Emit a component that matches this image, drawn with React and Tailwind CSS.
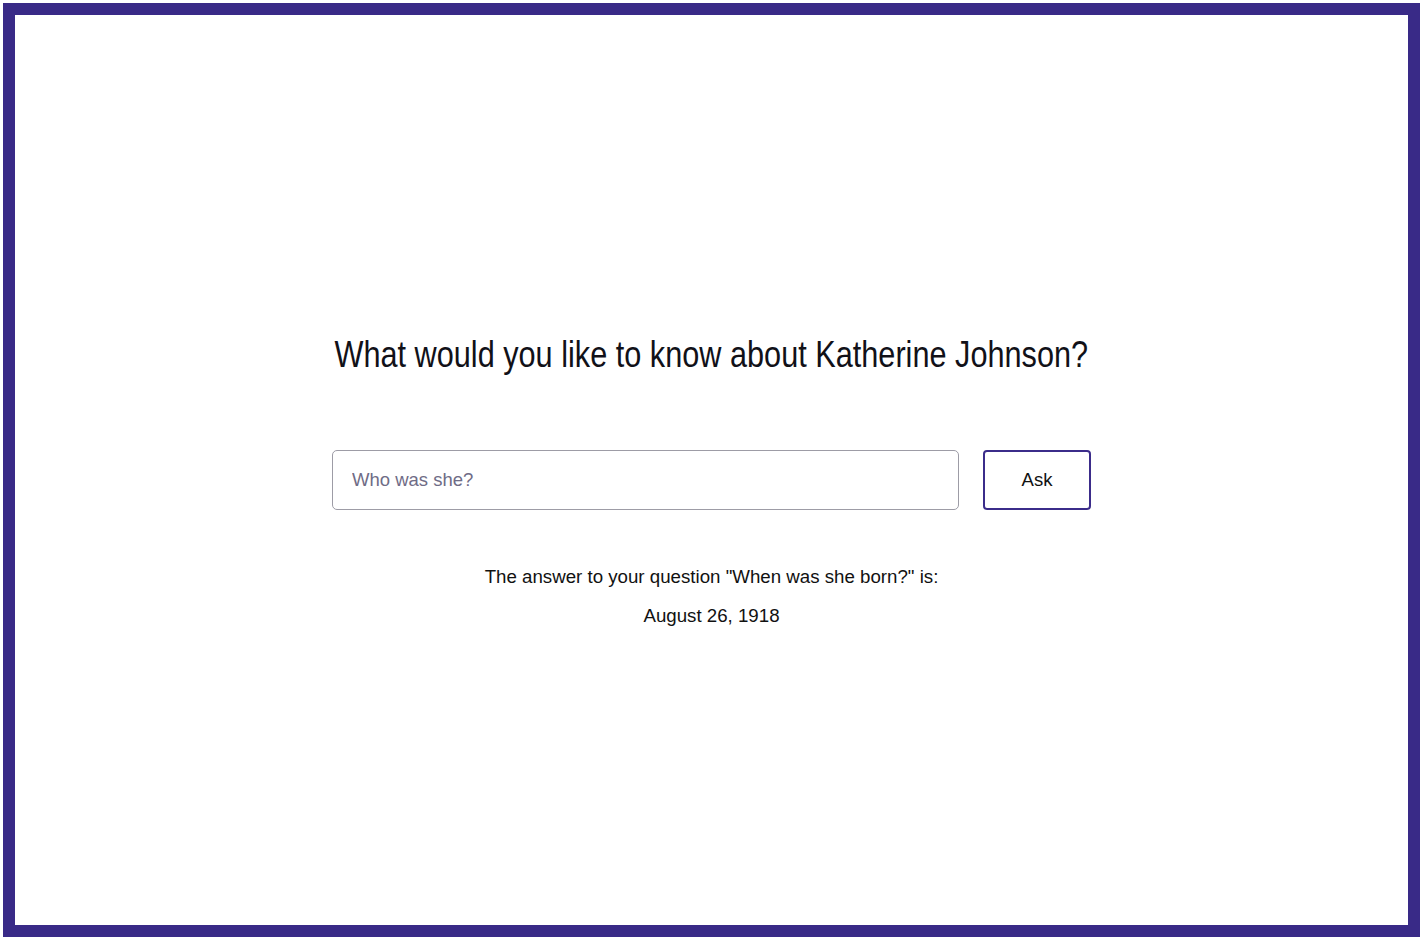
import React, { useState } from "react";

export default function App() {
  const [question, setQuestion] = useState("");

  return (
    <div className="w-full h-[942px] bg-white pt-[3px] pl-[3px] pr-[5px] pb-[5px] font-['Liberation_Sans',Arial,sans-serif]">
      <div className="h-full border-[12px] border-[#392a87] flex flex-col items-center">
        <h1 className="mt-[320px] text-[36px] leading-[40px] text-[#111118] scale-x-[0.852] whitespace-nowrap">
          What would you like to know about Katherine Johnson?
        </h1>

        <div className="mt-[75px] flex gap-[24px]">
          <input
            type="text"
            value={question}
            onChange={(e) => setQuestion(e.target.value)}
            placeholder="Who was she?"
            className="w-[627px] h-[60px] border border-[#9d9ca6] rounded-[5px] pl-[19px] text-[18.5px] text-[#222] placeholder:text-[#6f6c86] outline-none"
          />
          <button className="w-[108px] h-[60px] border-2 border-[#3b2c8a] rounded-[4px] text-[18.5px] text-[#111]">
            Ask
          </button>
        </div>

        <p className="mt-[55px] text-[18.7px] leading-[24px] text-[#111]">
          The answer to your question "When was she born?" is:
        </p>
        <p className="mt-[15px] text-[18.7px] leading-[24px] text-[#111]">
          August 26, 1918
        </p>
      </div>
    </div>
  );
}
